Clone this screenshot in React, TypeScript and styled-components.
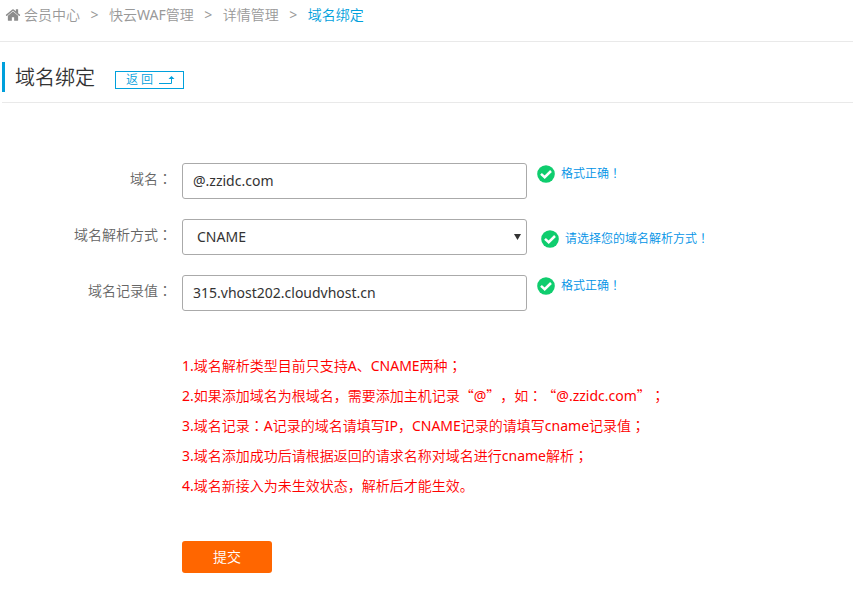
import React from "react";
import styled, { createGlobalStyle } from "styled-components";

const GlobalStyle = createGlobalStyle`
  *, *::before, *::after { box-sizing: border-box; }
  body {
    margin: 0;
    background: #fff;
    color: #333;
    font: 14px/30px "Noto Sans", "Noto Sans CJK SC DemiLight", "Noto Sans CJK SC", sans-serif;
    text-spacing-trim: space-all;
  }
  input, select, button { font: inherit; color: inherit; }
`;

const Breadcrumb = styled.nav`
  display: flex;
  align-items: center;
  height: 42px;
  padding: 0 5px 12px;
  border-bottom: 1px solid #e9e9e9;
  color: #999;
  white-space: nowrap;
`;

const HomeIcon = styled.svg`
  width: 16px;
  height: 16px;
  margin-right: 3px;
  fill: #8c8c8c;
`;

const Crumb = styled.a<{ $current?: boolean }>`
  color: ${(p) => (p.$current ? "#00a0dc" : "#999")};
  text-decoration: none;
`;

const Separator = styled.span`
  width: 29px;
  text-align: center;
`;

const TitleBar = styled.header`
  display: flex;
  align-items: flex-start;
  gap: 20px;
  margin: 20px 0 0 2px;
  padding-bottom: 10px;
  border-bottom: 1px solid #e9e9e9;
`;

const Title = styled.h1`
  height: 30px;
  margin: 0;
  padding-left: 10px;
  border-left: 3px solid #00a0dc;
  font-size: 20px;
  line-height: 32px;
  font-weight: 400;
`;

const BackLink = styled.a`
  display: flex;
  align-items: center;
  gap: 6px;
  height: 18px;
  margin-top: 9px;
  padding: 0 7px 0 10px;
  border: 1px solid #00a0dc;
  color: #00a0dc;
  font-size: 12px;
  line-height: 16px;
  text-decoration: none;
  white-space: pre;
`;

const Form = styled.form`
  display: flex;
  flex-direction: column;
  gap: 20px;
  padding: 60px 0 20px;
`;

const Row = styled.div`
  display: grid;
  grid-template-columns: 172px 345px 1fr;
  column-gap: 10px;
  align-items: start;
`;

const Label = styled.label`
  line-height: 32px;
  color: #666;
  text-align: right;
`;

const TextField = styled.input`
  width: 100%;
  height: 36px;
  padding: 0 10px 2px;
  border: 1px solid #aaa;
  border-radius: 3px;
  background: #fff;
  outline: none;
`;

const SelectBox = styled.div`
  position: relative;
`;

const Select = styled.select`
  display: block;
  width: 100%;
  height: 36px;
  padding: 0 24px 0 14px;
  border: 1px solid #aaa;
  border-radius: 3px;
  background: #fff;
  appearance: none;
  outline: none;
`;

const Arrow = styled.svg`
  position: absolute;
  right: 6px;
  top: 15px;
  width: 7px;
  height: 6px;
  fill: #333;
  pointer-events: none;
`;

const Hint = styled.div<{ $low?: boolean }>`
  display: flex;
  align-items: center;
  gap: 6px;
  height: 20px;
  margin: ${(p) => (p.$low ? "10px 0 0 4px" : "1px 0 0")};
  color: #0092e6;
  font-size: 12px;
  line-height: 20px;
  white-space: nowrap;
`;

const CheckIcon = styled.svg`
  width: 18px;
  height: 18px;
`;

const Notes = styled.div`
  margin: 20px 0 20px 182px;
  color: #f00;
`;

const Note = styled.p`
  margin: 0;
`;

const Centered = styled.span`
  font-family: "Noto Sans CJK TC DemiLight", "Noto Sans CJK TC", sans-serif;
  line-height: 1;
`;

const FullWidth = styled.span`
  font-family: "Noto Sans CJK SC DemiLight", "Noto Sans CJK SC", sans-serif;
  line-height: 1;
`;

const Submit = styled.button`
  align-self: flex-start;
  width: 90px;
  height: 32px;
  margin-left: 182px;
  padding: 0;
  border: 0;
  border-radius: 3px;
  background: #ff6600;
  color: #fff;
  line-height: 32px;
`;

/* Sets Chinese punctuation in the font whose glyphs sit in the middle of their cell. */
function Zh({ text }: { text: string }) {
  return (
    <>
      {text.split(/([：；！“”])/).map((part, i) => {
        if (/^[：；！]$/.test(part)) return <Centered key={i}>{part}</Centered>;
        if (/^[“”]$/.test(part)) return <FullWidth key={i}>{part}</FullWidth>;
        return part;
      })}
    </>
  );
}

function Valid({ text, low }: { text: string; low?: boolean }) {
  return (
    <Hint $low={low}>
      <CheckIcon viewBox="0 0 18 18" aria-hidden="true">
        <circle cx="9" cy="9" r="8.8" fill="#0fcd6e" />
        <path d="M4 8.800 7.700 12.200 14 6" fill="none" stroke="#fff" strokeWidth="2.5" />
      </CheckIcon>
      <span>
        <Zh text={text} />
      </span>
    </Hint>
  );
}

const crumbs = ["会员中心", "快云WAF管理", "详情管理", "域名绑定"];

const notes = [
  "1.域名解析类型目前只支持A、CNAME两种；",
  "2.如果添加域名为根域名，需要添加主机记录“@”，如：“@.zzidc.com”；",
  "3.域名记录：A记录的域名请填写IP，CNAME记录的请填写cname记录值；",
  "3.域名添加成功后请根据返回的请求名称对域名进行cname解析；",
  "4.域名新接入为未生效状态，解析后才能生效。",
];

export default function App() {
  return (
    <>
      <GlobalStyle />
      <Breadcrumb>
        <HomeIcon viewBox="70 0 1652 1792" aria-hidden="true">
          <path d="M1472 992v480q0 26-19 45t-45 19h-384v-384h-256v384h-384q-26 0-45-19t-19-45v-480q0-1 .5-3t.5-3l575-474 575 474q1 2 1 6zm223-69l-62 74q-8 9-21 11h-3q-13 0-21-7l-692-577-692 577q-12 8-24 7-13-2-21-11l-62-74q-8-10-7-23.500t11-21.500l719-599q32-26 76-26t76 26l244 204v-195q0-14 9-23t23-9h192q14 0 23 9t9 23v408l219 182q10 8 11 21.500t-7 23.500z" />
        </HomeIcon>
        {crumbs.map((name, i) => (
          <React.Fragment key={name}>
            {i > 0 && <Separator>&gt;</Separator>}
            <Crumb href="#" $current={i === crumbs.length - 1}>
              {name}
            </Crumb>
          </React.Fragment>
        ))}
      </Breadcrumb>

      <TitleBar>
        <Title>域名绑定</Title>
        <BackLink href="#">
          返 回
          <svg width="17" height="10" viewBox="0 0 17 10" aria-hidden="true">
            <path d="M0 8.500H12.500V2" fill="none" stroke="#00a0dc" />
            <path d="M9.500 4 12.500 1 15.500 4Z" fill="#00a0dc" />
          </svg>
        </BackLink>
      </TitleBar>

      <Form onSubmit={(e) => e.preventDefault()}>
        <Row>
          <Label htmlFor="domain">
            <Zh text="域名：" />
          </Label>
          <TextField id="domain" type="text" defaultValue="@.zzidc.com" />
          <Valid text="格式正确！" />
        </Row>
        <Row>
          <Label htmlFor="method">
            <Zh text="域名解析方式：" />
          </Label>
          <SelectBox>
            <Select id="method" defaultValue="CNAME">
              <option>A</option>
              <option>CNAME</option>
            </Select>
            <Arrow viewBox="0 0 7 6" aria-hidden="true">
              <path d="M0 0H7L3.500 6Z" />
            </Arrow>
          </SelectBox>
          <Valid text="请选择您的域名解析方式！" low />
        </Row>
        <Row>
          <Label htmlFor="record">
            <Zh text="域名记录值：" />
          </Label>
          <TextField id="record" type="text" defaultValue="315.vhost202.cloudvhost.cn" />
          <Valid text="格式正确！" />
        </Row>
        <Notes>
          {notes.map((text) => (
            <Note key={text}>
              <Zh text={text} />
            </Note>
          ))}
        </Notes>
        <Submit type="submit">提交</Submit>
      </Form>
    </>
  );
}
